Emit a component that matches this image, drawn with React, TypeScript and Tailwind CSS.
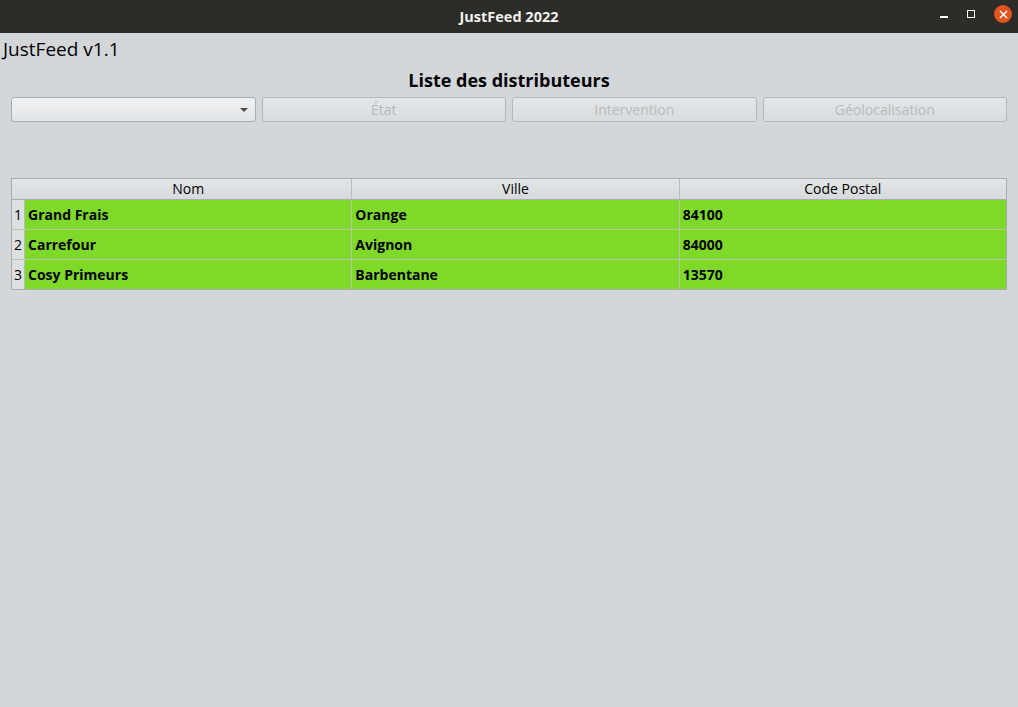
import { useState } from "react";

const rows = [
  { nom: "Grand Frais", ville: "Orange", cp: "84100" },
  { nom: "Carrefour", ville: "Avignon", cp: "84000" },
  { nom: "Cosy Primeurs", ville: "Barbentane", cp: "13570" },
];

const font = { fontFamily: '"Open Sans", "Noto Sans", sans-serif' };

function DisabledButton({ label }: { label: string }) {
  return (
    <button
      disabled
      className="h-[25px] flex-1 rounded-[3px] border border-[#b4b8bb] bg-gradient-to-b from-[#e4e6e8] to-[#d9dcde] text-[14px] text-[#b8bbbd]"
    >
      {label}
    </button>
  );
}

export default function App() {
  const [selected] = useState("");

  return (
    <div className="flex h-[707px] w-[1018px] flex-col bg-[#d3d7da] text-black" style={font}>
      {/* window title bar */}
      <div className="relative flex h-[33px] shrink-0 items-center justify-center bg-[#2c2c29]">
        <span className="text-[14.5px] font-bold text-[#f2f2f2]">JustFeed 2022</span>
        <div className="absolute right-[6px] top-[5px] flex items-center gap-[19px]">
          <span className="mt-[6px] block h-[1.5px] w-[8px] bg-white" />
          <span className="block h-[8px] w-[8px] border-[1.5px] border-white" />
          <span className="flex h-[18px] w-[18px] items-center justify-center rounded-full bg-[#e5531f]">
            <svg width="9" height="9" viewBox="0 0 9 9">
              <path d="M1 1 L8 8 M8 1 L1 8" stroke="white" strokeWidth="1.6" />
            </svg>
          </span>
        </div>
      </div>

      <div className="pl-[3px] pt-[5px] text-[19px] leading-[22px]">JustFeed v1.1</div>
      <div className="mt-[9px] text-center text-[18px] font-bold leading-[22px]">
        Liste des distributeurs
      </div>

      <div className="mt-[6px] flex gap-[6px] px-[11px]">
        <div className="relative flex h-[25px] flex-1 items-center rounded-[3px] border border-[#a9adb0] bg-gradient-to-b from-[#f1f2f3] to-[#e1e4e6]">
          <span className="pl-2 text-[14px]">{selected}</span>
          <span className="absolute right-[7px] top-[10px] h-0 w-0 border-x-[4px] border-t-[4px] border-x-transparent border-t-[#4c4c4c]" />
        </div>
        <DisabledButton label="État" />
        <DisabledButton label="Intervention" />
        <DisabledButton label="Géolocalisation" />
      </div>

      <div className="mx-[11px] mt-[56px] border border-[#a9adb0] text-[14px]">
        <div className="flex h-[21px] border-b border-[#a9adb0] bg-gradient-to-b from-[#e3e5e7] to-[#d7dadc] leading-[20px]">
          <div className="w-[13px]" />
          <div className="flex-1 border-r border-[#b8bcbf] text-center">Nom</div>
          <div className="flex-1 border-r border-[#b8bcbf] text-center">Ville</div>
          <div className="flex-1 text-center">Code Postal</div>
        </div>
        {rows.map((r, i) => (
          <div
            key={r.nom}
            className={`flex ${i < rows.length - 1 ? "h-[30px] border-b border-[#b6c8a6]" : "h-[29px]"}`}
          >
            <div className="flex w-[13px] items-center justify-center border-r border-[#b6bbbe] bg-[#dde0e2] text-[14px]">
              {i + 1}
            </div>
            <div className="flex flex-1 items-center border-r border-[#b6c8a6] bg-[#7ed928] pl-[3px] font-bold">
              {r.nom}
            </div>
            <div className="flex flex-1 items-center border-r border-[#b6c8a6] bg-[#7ed928] pl-[3px] font-bold">
              {r.ville}
            </div>
            <div className="flex flex-1 items-center bg-[#7ed928] pl-[3px] font-bold">{r.cp}</div>
          </div>
        ))}
      </div>
    </div>
  );
}
